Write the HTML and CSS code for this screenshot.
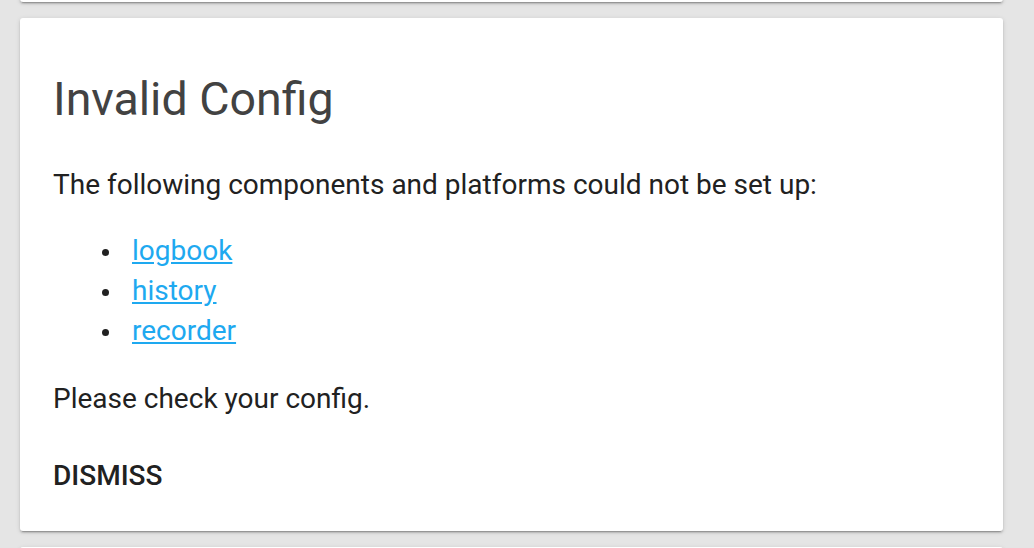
FILE: index.html
```html
<!DOCTYPE html>
<html>
<head>
<meta charset="utf-8">
<link rel="stylesheet" href="styles.css">
</head>
<body>
<div class="stack">
  <div class="card card-prev"></div>
  <div class="card card-main">
    <h1 class="title">Invalid Config</h1>
    <p class="text">The following components and platforms could not be set up:</p>
    <ul class="list">
      <li><a href="#">logbook</a></li>
      <li><a href="#">history</a></li>
      <li><a href="#">recorder</a></li>
    </ul>
    <p class="text">Please check your config.</p>
    <div class="actions"><span class="btn">Dismiss</span></div>
  </div>
  <div class="card card-next"></div>
</div>
</body>
</html>
```
FILE: styles.css
```css
html, body {
  margin: 0;
  padding: 0;
  background: #e5e5e5;
  overflow: hidden;
  height: 548px;
}
.stack {
  display: flex;
  flex-direction: column;
  gap: 16px;
  padding: 0 31px 0 20px;
  margin-top: -98px;
  font-family: Roboto, "Liberation Sans", sans-serif;
}
.card {
  background: #fff;
  border-radius: 3px;
  box-shadow: 0 2px 2px rgba(0,0,0,0.14), 0 1px 5px rgba(0,0,0,0.12), 0 3px 1px -2px rgba(0,0,0,0.2);
}
.card-prev { height: 100px; }
.card-next { height: 100px; }
.card-main {
  padding: 0 33px;
  display: flex;
  flex-direction: column;
}
.title {
  margin: 0;
  padding-top: 53px;
  font-size: 46.5px;
  font-weight: 400;
  line-height: 56px;
  color: #424242;
}
.text {
  margin: 0;
  font-size: 28px;
  line-height: 40px;
  color: #212121;
}
.card-main .title + .text { margin-top: 38px; }
.list {
  margin: 26px 0 28px;
  padding-left: 79px;
  list-style: none;
  font-size: 28px;
  line-height: 40px;
  color: #212121;
}
.list li::before {
  content: "";
  display: inline-block;
  width: 7px;
  height: 7px;
  border-radius: 50%;
  background: #212121;
  vertical-align: middle;
  margin-left: -30px;
  margin-right: 23px;
}
.list a { color: #1ea9f0; text-decoration: underline; }
.actions {
  padding: 37px 0 35px;
}
.btn {
  font-size: 28px;
  font-weight: 500;
  text-transform: uppercase;
  color: #212121;
  line-height: 40px;
  display: inline-block;
}
```
